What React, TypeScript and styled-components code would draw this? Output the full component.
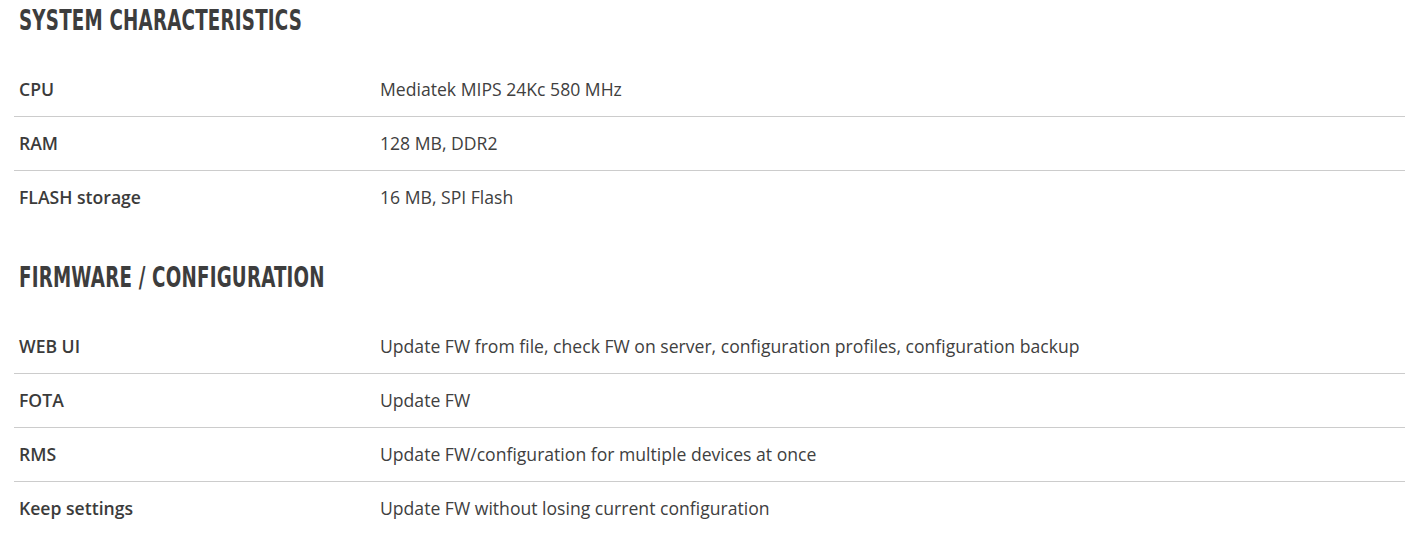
import React from "react";
import styled, { createGlobalStyle } from "styled-components";

const Global = createGlobalStyle`
  html, body { margin: 0; padding: 0; background: #ffffff; }
  body { font-family: "Open Sans", "Liberation Sans", sans-serif; color: #404040; }
`;

const Page = styled.div`
  padding: 0 5px 0 14px;
`;

const Section = styled.section`
  & + & { margin-top: 33px; }
`;

const Heading = styled.h2`
  margin: 0 0 22px 0;
  padding-left: 5px;
  height: 40px;
  line-height: 40px;
  font-weight: 700;
  color: #3d3d3d;
  text-transform: uppercase;
`;

const HeadingText = styled.span`
  display: inline-block;
  font-family: "DejaVu Sans Condensed", "DejaVu Sans", sans-serif;
  font-stretch: condensed;
  font-size: 29px;
  letter-spacing: 0.3px;
  transform: scaleX(0.7);
  transform-origin: left center;
  white-space: nowrap;
`;

const Table = styled.div`
  display: flex;
  flex-direction: column;
`;

const Row = styled.div`
  display: grid;
  grid-template-columns: 366px 1fr;
  height: 54px;
  align-items: center;
  & + & { box-shadow: inset 0 1px 0 #cccccc; }
`;

const Label = styled.div`
  padding-left: 5px;
  font-weight: 600;
  font-size: 17.6px;
  color: #3b3b3b;
`;

const Value = styled.div`
  font-size: 17.6px;
  color: #404040;
`;

const sections: { title: string; rows: [string, string][] }[] = [
  {
    title: "System characteristics",
    rows: [
      ["CPU", "Mediatek MIPS 24Kc 580 MHz"],
      ["RAM", "128 MB, DDR2"],
      ["FLASH storage", "16 MB, SPI Flash"],
    ],
  },
  {
    title: "Firmware / configuration",
    rows: [
      ["WEB UI", "Update FW from file, check FW on server, configuration profiles, configuration backup"],
      ["FOTA", "Update FW"],
      ["RMS", "Update FW/configuration for multiple devices at once"],
      ["Keep settings", "Update FW without losing current configuration"],
    ],
  },
];

export default function App() {
  return (
    <Page>
      <Global />
      {sections.map((s) => (
        <Section key={s.title}>
          <Heading>
            <HeadingText>{s.title}</HeadingText>
          </Heading>
          <Table>
            {s.rows.map(([k, v]) => (
              <Row key={k}>
                <Label>{k}</Label>
                <Value>{v}</Value>
              </Row>
            ))}
          </Table>
        </Section>
      ))}
    </Page>
  );
}
